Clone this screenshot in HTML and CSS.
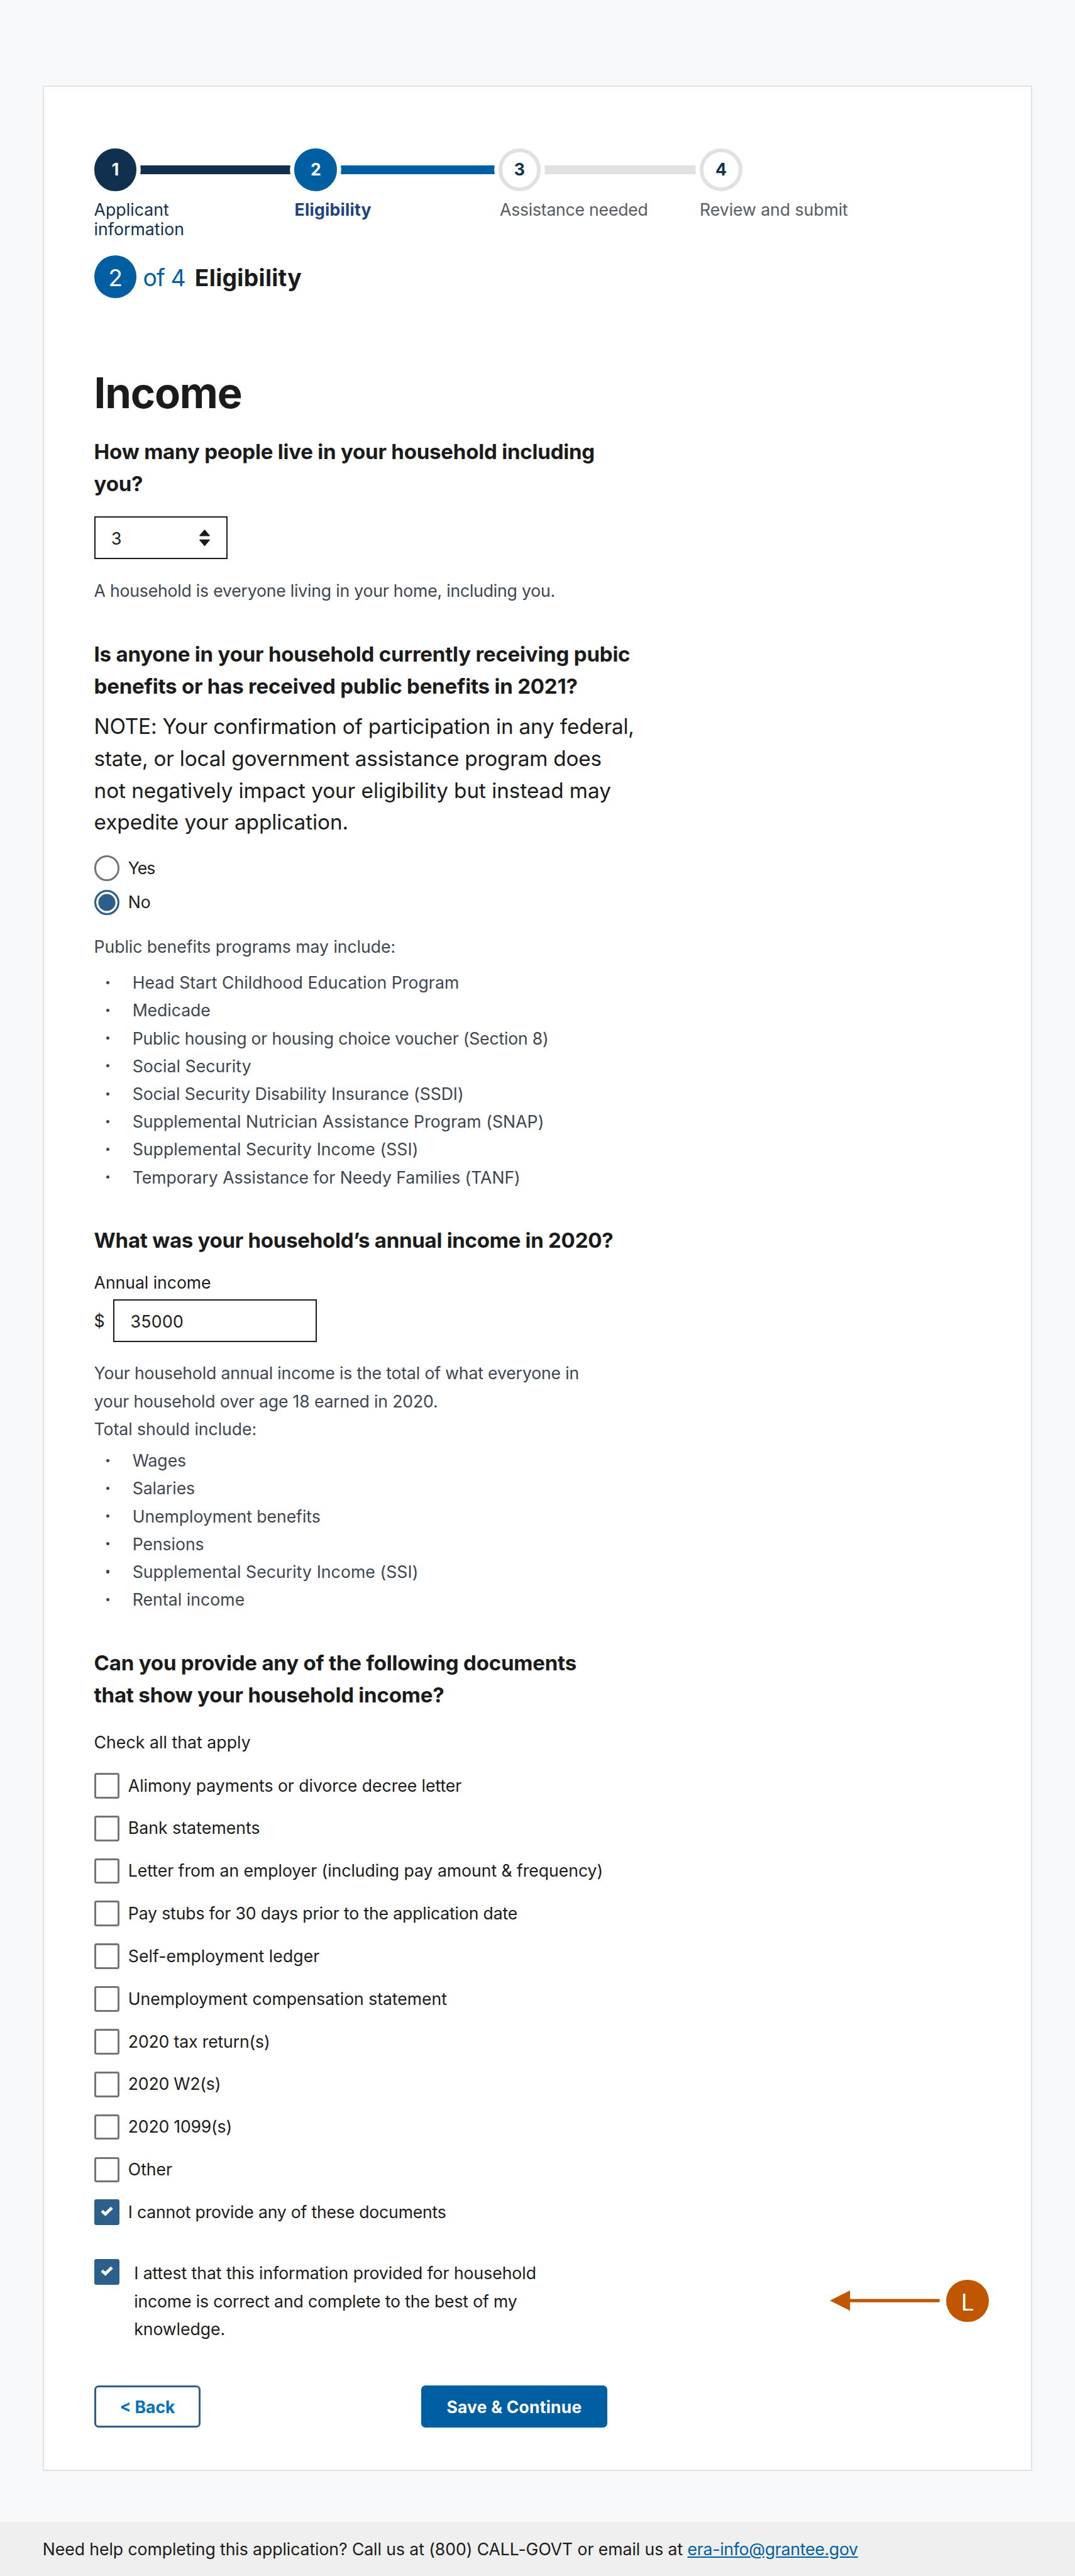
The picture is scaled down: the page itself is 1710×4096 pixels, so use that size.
FILE: index.html
```
<!DOCTYPE html>
<html lang="en">
<head>
<meta charset="utf-8">
<title>Income – Eligibility</title>
<link rel="stylesheet" href="styles.css">
</head>
<body>
<svg width="0" height="0" class="sprite" aria-hidden="true">
  <symbol id="check" viewBox="0 0 48 48"><path d="M14.2 21.8 L20.8 27.7 L33 16" fill="none" stroke="#fff" stroke-width="5.8" stroke-linejoin="miter"/></symbol>
</svg>
<main class="card">
  <ol class="steps">
    <li class="step done">
      <div class="track"><span class="dot">1</span><span class="bar"></span></div>
      <span class="step-label wide">Applicant<br>information</span>
    </li>
    <li class="step current">
      <div class="track"><span class="dot">2</span><span class="bar"></span></div>
      <span class="step-label">Eligibility</span>
    </li>
    <li class="step">
      <div class="track"><span class="dot">3</span><span class="bar"></span></div>
      <span class="step-label inset">Assistance needed</span>
    </li>
    <li class="step">
      <div class="track"><span class="dot">4</span></div>
      <span class="step-label">Review and submit</span>
    </li>
  </ol>
  <div class="progress">
    <span class="progress-dot">2</span>
    <span class="progress-total">of 4</span>
    <strong class="progress-name">Eligibility</strong>
  </div>

  <h1>Income</h1>

  <section class="household">
    <h2>How many people live in your household including<br>you?</h2>
    <div class="select">3
      <svg class="arrows" viewBox="0 0 20 32"><path d="M10 1 L19 11.5 H1 Z M10 30 L19 19.5 H1 Z" fill="#1b1b1b" stroke="#1b1b1b" stroke-width="1.6" stroke-linejoin="round"/></svg>
    </div>
    <p class="hint flat">A household is everyone living in your home, including you.</p>
  </section>

  <section class="benefits">
    <h2>Is anyone in your household currently receiving pubic<br>benefits or has received public benefits in 2021?</h2>
    <p class="note"><span class="note-first">NOTE: Your confirmation of participation in any federal,<br>state, or local government assistance program does</span><br>not negatively impact your eligibility but instead may<br>expedite your application.</p>
    <div class="radios">
      <label class="option tight"><span class="radio"></span>Yes</label>
      <label class="option"><span class="radio on"></span>No</label>
    </div>
    <p class="hint">Public benefits programs may include:</p>
    <ul class="bullets">
      <li class="wide">Head Start Childhood Education Program</li>
      <li>Medicade</li>
      <li class="flat">Public housing or housing choice voucher (Section 8)</li>
      <li class="wide">Social Security</li>
      <li>Social Security Disability Insurance (SSDI)</li>
      <li class="wide">Supplemental Nutrician Assistance Program (SNAP)</li>
      <li class="wide">Supplemental Security Income (SSI)</li>
      <li>Temporary Assistance for Needy Families (TANF)</li>
    </ul>
  </section>

  <section class="income">
    <h2 class="snug">What was your household’s annual income in 2020?</h2>
    <p class="field-label">Annual income</p>
    <div class="money"><span class="currency">$</span><div class="input wider">35000</div></div>
    <p class="hint"><span class="narrow">Your household annual income is the total of what everyone in<br>your household over age 18 earned in 2020.</span><br>Total should include:</p>
    <ul class="bullets">
      <li>Wages</li>
      <li>Salaries</li>
      <li>Unemployment benefits</li>
      <li>Pensions</li>
      <li class="wide">Supplemental Security Income (SSI)</li>
      <li class="wide">Rental income</li>
    </ul>
  </section>

  <section class="documents">
    <h2>Can you provide any of the following documents<br>that show your household income?</h2>
    <p class="instruction wide">Check all that apply</p>
    <div class="checks">
      <label class="option"><span class="box"></span>Alimony payments or divorce decree letter</label>
      <label class="option wide"><span class="box"></span>Bank statements</label>
      <label class="option"><span class="box"></span>Letter from an employer (including pay amount &amp; frequency)</label>
      <label class="option narrow"><span class="box"></span>Pay stubs for 30 days prior to the application date</label>
      <label class="option wide"><span class="box"></span>Self-employment ledger</label>
      <label class="option"><span class="box"></span>Unemployment compensation statement</label>
      <label class="option narrow"><span class="box"></span>2020 tax return(s)</label>
      <label class="option flat"><span class="box"></span>2020 W2(s)</label>
      <label class="option flat"><span class="box"></span>2020 1099(s)</label>
      <label class="option"><span class="box"></span>Other</label>
      <label class="option flat"><svg class="box on"><use href="#check"/></svg>I cannot provide any of these documents</label>
    </div>
  </section>

  <div class="attest-row">
    <label class="attest"><svg class="box on"><use href="#check"/></svg><span>I attest that this information provided for household<br><span class="narrow">income is correct and complete to the best of my</span><br>knowledge.</span></label>
    <div class="callout">
      <svg class="pointer" viewBox="0 0 206 38"><path d="M0 19 L38 0 V16 H206 V22 H38 V38 Z" fill="#c05600"/></svg>
      <span class="marker">L</span>
    </div>
  </div>

  <div class="actions">
    <button class="btn outline" type="button">&lt; Back</button>
    <button class="btn primary" type="button">Save &amp; Continue</button>
  </div>
</main>
<footer class="help">Need help completing this application? Call us at (800) CALL-GOVT or email us at <a href="#">era-info@grantee.gov</a></footer>
</body>
</html>
```
FILE: styles.css
```
* { box-sizing: border-box; }

html { font-size: 8.48214px; }

body {
  margin: 0;
  padding-top: 16rem;
  background: #f8f9fb;
  color: #1b1b1b;
  font-family: Inter, "Liberation Sans", sans-serif;
  font-size: 3.14rem;
  line-height: 5.21rem;
  letter-spacing: -0.002em;
}

h1, h2, p, ul, ol { margin: 0; padding: 0; }
ul, ol { list-style: none; }
.sprite { display: none; }

.wide { letter-spacing: 0.002em; }
.wider { letter-spacing: 0.012em; }
.flat { letter-spacing: -0.008em; }
.narrow { letter-spacing: -0.006em; }
.tight { letter-spacing: -0.04em; }

.card {
  display: flex;
  flex-direction: column;
  width: 185.6rem;
  height: 447.2rem;
  margin: 0 8rem;
  padding: 11.6rem 0 0 9.4rem;
  border: 2px solid #dfe1e2;
  background: #fff;
}

/* Step indicator */
.steps {
  display: grid;
  grid-template-columns: 37.6rem 38.2rem 37.8rem 30rem;
}
.track { display: flex; align-items: center; }
.dot {
  position: relative;
  z-index: 1;
  flex: none;
  width: 8rem;
  height: 8rem;
  border: 0.8rem solid #dfe1e2;
  border-radius: 50%;
  background: #fff;
  box-shadow: 0 0 0 0.8rem #fff;
  color: #112f4e;
  font-weight: 700;
  line-height: 6.5rem;
  text-align: center;
}
.bar { flex: 1; height: 1.6rem; background: #dfe1e2; }
.done .dot, .done .bar { background: #112f4e; border-color: #112f4e; }
.current .dot, .current .bar { background: #005ea2; border-color: #005ea2; }
.done .dot, .current .dot { color: #fff; }
.step-label {
  display: block;
  margin-top: 1.68rem;
  color: #565c65;
  line-height: 3.6rem;
}
.inset { padding-left: 0.3rem; letter-spacing: -0.009em; }
.done .step-label { color: #112f4e; }
.current .step-label { color: #1a4480; font-weight: 700; letter-spacing: 0.01em; }

.progress {
  display: flex;
  align-items: flex-start;
  height: 8rem;
  margin-top: 3.12rem;
  font-size: 4.4rem;
  line-height: 8.4rem;
}
.progress-dot {
  width: 8rem;
  height: 8rem;
  border-radius: 50%;
  background: #005ea2;
  color: #fff;
  text-align: center;
}
.progress-total { width: 9.8rem; padding-left: 1.2rem; color: #005ea2; letter-spacing: -0.025em; }
.progress-name { padding-left: 1.1rem; letter-spacing: 0.007em; }

h1 {
  margin-top: 13.08rem;
  font-size: 7.9rem;
  line-height: 9.6rem;
  letter-spacing: -0.018em;
}
h2 {
  font-size: 3.9rem;
  line-height: 6rem;
  letter-spacing: -0.007em;
}
.snug { letter-spacing: -0.009em; }

.hint, .bullets { color: #3d4551; }

.bullets { padding-left: 7.2rem; }
.bullets li { display: flex; align-items: center; }
.bullets li::before {
  content: "";
  width: 0.6rem;
  height: 0.6rem;
  margin: 0 4.3rem 0 -4.9rem;
  border-radius: 50%;
  background: #3d4551;
}

/* Household size */
.household { margin-top: 3.17rem; }
.select {
  display: flex;
  align-items: center;
  justify-content: space-between;
  width: 25rem;
  height: 8rem;
  margin-top: 3.15rem;
  padding: 0.1rem 3rem 0 3rem;
  border: 2px solid #1b1b1b;
}
.arrows { width: 2rem; height: 3.2rem; }
.household .hint { margin-top: 3.25rem; }

/* Public benefits */
.benefits { margin-top: 6.37rem; }
.note {
  margin-top: 1.57rem;
  font-size: 3.93rem;
  line-height: 5.99rem;
  letter-spacing: -0.002em;
}
.note-first { letter-spacing: -0.006em; }
.radios, .checks { display: grid; }
.radios { gap: 1.6rem; margin-top: 3.21rem; }
.option {
  display: flex;
  align-items: center;
  gap: 1.6rem;
  height: 4.8rem;
  line-height: 4.9rem;
}
.radio {
  width: 4.8rem;
  height: 4.8rem;
  border: 0.4rem solid #71767a;
  border-radius: 50%;
}
.radio.on {
  border-color: #2c608a;
  background: #2c608a;
  box-shadow: inset 0 0 0 0.4rem #fff;
}
.benefits .hint { margin-top: 3.25rem; }
.benefits .bullets { margin-top: 1.55rem; }

/* Annual income */
.income { margin-top: 6.28rem; }
.field-label { margin-top: 2.25rem; }
.money {
  display: flex;
  align-items: center;
  margin-top: 0.55rem;
}
.currency { width: 3.6rem; }
.input {
  width: 38.2rem;
  height: 8rem;
  padding-left: 3rem;
  border: 2px solid #1b1b1b;
  line-height: 7.8rem;
}
.income .hint { margin-top: 3.26rem; }
.income .bullets { margin-top: 0.74rem; }

/* Documents */
.documents { margin-top: 6.32rem; }
.instruction { margin-top: 3.28rem; }
.checks { gap: 3.2rem; margin-top: 3.1rem; }
.box {
  flex: none;
  width: 4.8rem;
  height: 4.8rem;
  border: 0.4rem solid #71767a;
  border-radius: 0.4rem;
}
.box.on { border: 0; background: #2c608a; }

.attest-row {
  display: flex;
  justify-content: space-between;
  height: 15.6rem;
  margin-top: 6.4rem;
  padding-right: 7.9rem;
}
.attest { display: flex; gap: 2.7rem; }
.callout { display: flex; align-items: center; gap: 1.2rem; }
.pointer { width: 20.6rem; height: 3.8rem; }
.marker {
  width: 8rem;
  height: 8rem;
  border-radius: 50%;
  background: #c05600;
  color: #fff;
  font-size: 4.36rem;
  line-height: 8.4rem;
  text-align: center;
}

.actions {
  display: flex;
  justify-content: space-between;
  width: 96.2rem;
  margin-top: 8rem;
}
.btn {
  height: 8rem;
  padding: 0.2rem 0 0;
  border: 0;
  border-radius: 0.8rem;
  font: 700 3.12rem/7rem Inter, "Liberation Sans", sans-serif;
}
.outline {
  width: 20rem;
  border: 0.4rem solid #2c608a;
  background: #fff;
  color: #0071bc;
}
.primary { width: 34.8rem; background: #005ea2; color: #fff; letter-spacing: 0.009em; }

.help {
  height: 10.2rem;
  margin-top: 9.6rem;
  padding-left: 8rem;
  background: #efefef;
  line-height: 10.3rem;
  letter-spacing: -0.003em;
}
.help a { color: #005ea2; letter-spacing: -0.01em; }
```
